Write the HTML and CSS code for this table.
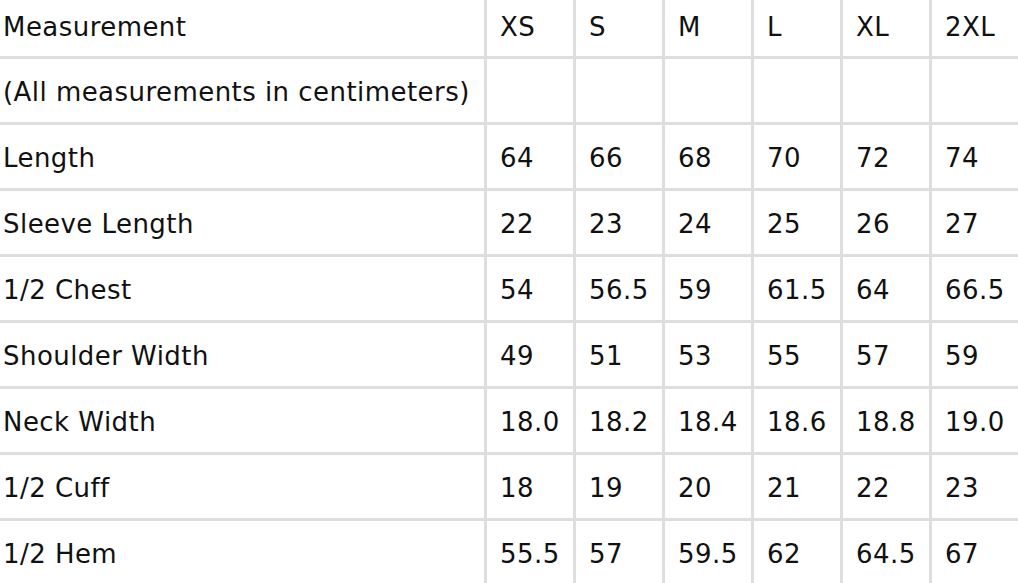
FILE: index.html
```html
<!DOCTYPE html>
<html lang="en">
<head>
<meta charset="utf-8">
<title>Size chart</title>
<link rel="stylesheet" href="styles.css">
</head>
<body>
<table class="size-table">
  <colgroup>
    <col class="col-label">
    <col class="col-size"><col class="col-size"><col class="col-size"><col class="col-size"><col class="col-size"><col class="col-size">
  </colgroup>
  <tr class="row-head"><td>Measurement</td><td>XS</td><td>S</td><td>M</td><td>L</td><td>XL</td><td>2XL</td></tr>
  <tr><td>(All measurements in centimeters)</td><td></td><td></td><td></td><td></td><td></td><td></td></tr>
  <tr><td>Length</td><td>64</td><td>66</td><td>68</td><td>70</td><td>72</td><td>74</td></tr>
  <tr><td>Sleeve Length</td><td>22</td><td>23</td><td>24</td><td>25</td><td>26</td><td>27</td></tr>
  <tr><td>1/2 Chest</td><td>54</td><td>56.5</td><td>59</td><td>61.5</td><td>64</td><td>66.5</td></tr>
  <tr><td>Shoulder Width</td><td>49</td><td>51</td><td>53</td><td>55</td><td>57</td><td>59</td></tr>
  <tr><td>Neck Width</td><td>18.0</td><td>18.2</td><td>18.4</td><td>18.6</td><td>18.8</td><td>19.0</td></tr>
  <tr><td>1/2 Cuff</td><td>18</td><td>19</td><td>20</td><td>21</td><td>22</td><td>23</td></tr>
  <tr class="row-last"><td>1/2 Hem</td><td>55.5</td><td>57</td><td>59.5</td><td>62</td><td>64.5</td><td>67</td></tr>
</table>
</body>
</html>
```
FILE: styles.css
```css
html, body {
  margin: 0;
  padding: 0;
  background: #fff;
  overflow: hidden;
}

.size-table {
  border-collapse: separate;
  border-spacing: 0;
  table-layout: fixed;
  width: 1018px;
  font-family: "DejaVu Sans", Verdana, sans-serif;
  font-size: 26px;
  letter-spacing: 0.45px;
  color: #111;
}

.col-label { width: 487px; }
.col-size { width: 89px; }

.size-table td {
  box-sizing: border-box;
  height: 66px;
  padding: 3px 0 0 13px;
  border-right: 3px solid #dedede;
  border-bottom: 3px solid #dedede;
  vertical-align: middle;
  white-space: nowrap;
  overflow: hidden;
}

.size-table td:first-child {
  padding-left: 3px;
}

.size-table td:last-child {
  border-right: none;
}

.size-table .row-head td {
  height: 59px;
  padding-top: 0;
  padding-bottom: 3px;
}

.size-table .row-last td {
  border-bottom: none;
  padding-bottom: 3px;
}
```
